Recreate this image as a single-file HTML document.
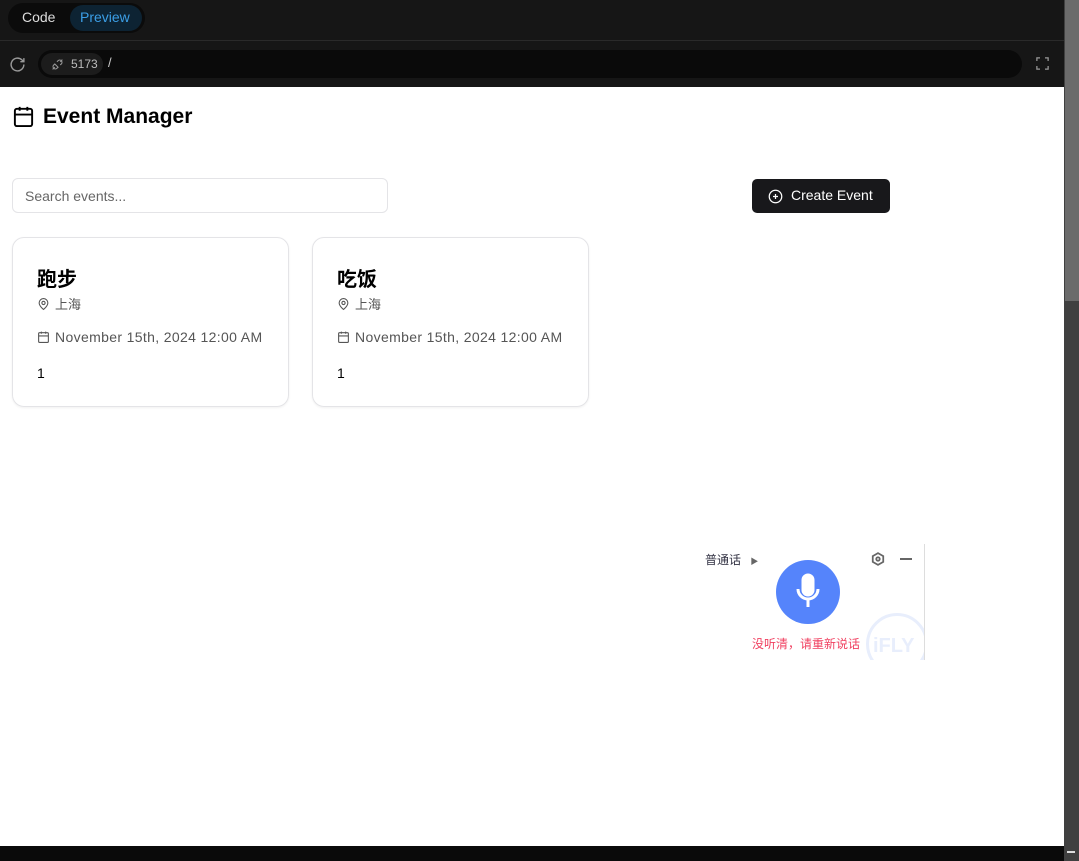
<!DOCTYPE html>
<html><head><meta charset="utf-8"><style>
*{box-sizing:border-box;margin:0;padding:0}
body{width:1079px;height:861px;overflow:hidden;background:#161616;font-family:"Liberation Sans","Noto Sans CJK SC",sans-serif;position:relative}
.top{position:absolute;left:0;top:0;width:1064px;height:41px;background:#161616;border-bottom:1px solid #2a2a2a}
.tabs{position:absolute;left:8px;top:3px;height:30px;width:137px;border-radius:15px;background:#0b0b0b}
.tabs span{position:absolute;top:6px;font-size:14px}
.bar{position:absolute;left:0;top:42px;width:1064px;height:45px;background:#161616}
.url{position:absolute;left:38px;top:8px;width:984px;height:28px;border-radius:14px;background:#0a0a0a}
.port{position:absolute;left:3px;top:3px;width:62px;height:22px;border-radius:11px;background:#1c1c1c;color:#bbb;font-size:12px;padding:4px 0 0 30px}
.main{position:absolute;left:0;top:87px;width:1064px;height:759px;background:#fff}
.sb{position:absolute;left:1064px;top:0;width:15px;height:861px;background:#404040}
.thumb{position:absolute;left:1065px;top:0;width:14px;height:301px;background:#6b6b6b}
.card{position:absolute;top:150px;width:277px;height:170px;border:1px solid #e4e4e7;border-radius:12px;box-shadow:0 1px 2px rgba(0,0,0,.06)}
.card h3{position:absolute;left:24px;top:25px;font-size:20px;font-weight:bold;color:#000}
.card .loc{position:absolute;left:24px;top:56px;font-size:13px;color:#555}
.card .dt{position:absolute;left:24px;top:91px;font-size:14px;color:#555;letter-spacing:0.35px}
.card .n{position:absolute;left:24px;top:127px;font-size:14px;color:#000}
</style></head><body>
<div class="top"><div class="tabs"><span style="left:14px;color:#ddd">Code</span><div style="position:absolute;left:62px;top:2px;width:72px;height:26px;border-radius:13px;background:#0d2333"></div><span style="left:72px;color:#3b9ee6">Preview</span></div></div>
<div class="bar">
<svg style="position:absolute;left:9px;top:14px" width="17" height="17" viewBox="0 0 24 24" fill="none" stroke="#999" stroke-width="2"><path d="M21 12a9 9 0 1 1-3-6.7L21 8M21 3v5h-5"/></svg>
<div class="url"><div class="port"><svg style="position:absolute;left:10px;top:5px" width="13" height="13" viewBox="0 0 24 24" fill="none" stroke="#999" stroke-width="2"><path d="M3 21l4-4M17 7l4-4M7 11l6 6-2 2a4 4 0 0 1-6-6zM11 7l2-2a4 4 0 0 1 6 6l-2 2"/></svg>5173</div><span style="position:absolute;left:70px;top:5px;color:#ccc;font-size:13px">/</span></div>
<svg style="position:absolute;left:1035px;top:14px" width="15" height="15" viewBox="0 0 24 24" fill="none" stroke="#999" stroke-width="2"><path d="M3 8V3h5M16 3h5v5M21 16v5h-5M8 21H3v-5"/></svg>
</div>
<div class="main">
<svg style="position:absolute;left:12px;top:18px" width="23" height="23" viewBox="0 0 24 24" fill="none" stroke="#000" stroke-width="2"><rect x="3" y="4" width="18" height="18" rx="2"/><path d="M16 2v4M8 2v4M3 10h18"/></svg>
<div style="position:absolute;left:43px;top:18px;font-size:21px;font-weight:bold;color:#000">Event Manager</div>
<div style="position:absolute;left:12px;top:91px;width:376px;height:35px;border:1px solid #e4e4e7;border-radius:6px;font-size:14px;color:#666;padding:9px 0 0 12px">Search events...</div>
<div style="position:absolute;left:752px;top:92px;width:138px;height:34px;background:#18181b;border-radius:5px;color:#fff;font-size:14px;padding:8px 0 0 39px">Create Event
<svg style="position:absolute;left:16px;top:10px" width="15" height="15" viewBox="0 0 24 24" fill="none" stroke="#fff" stroke-width="2"><circle cx="12" cy="12" r="10"/><path d="M12 8v8M8 12h8"/></svg></div>
<div class="card" style="left:12px"><h3>跑步</h3><div class="loc">
<svg style="vertical-align:-2px;margin-right:5px" width="13" height="14" viewBox="0 0 24 24" fill="none" stroke="#555" stroke-width="2"><path d="M20 10c0 6-8 12-8 12s-8-6-8-12a8 8 0 0 1 16 0z"/><circle cx="12" cy="10" r="3"/></svg>上海</div>
<div class="dt"><svg style="vertical-align:-2px;margin-right:5px" width="13" height="14" viewBox="0 0 24 24" fill="none" stroke="#555" stroke-width="2"><rect x="3" y="4" width="18" height="18" rx="2"/><path d="M16 2v4M8 2v4M3 10h18M8 14h.01M12 14h.01M16 14h.01M8 18h.01M12 18h.01M16 18h.01"/></svg>November 15th, 2024 12:00 AM</div><div class="n">1</div></div>
<div class="card" style="left:312px"><h3>吃饭</h3><div class="loc">
<svg style="vertical-align:-2px;margin-right:5px" width="13" height="14" viewBox="0 0 24 24" fill="none" stroke="#555" stroke-width="2"><path d="M20 10c0 6-8 12-8 12s-8-6-8-12a8 8 0 0 1 16 0z"/><circle cx="12" cy="10" r="3"/></svg>上海</div>
<div class="dt"><svg style="vertical-align:-2px;margin-right:5px" width="13" height="14" viewBox="0 0 24 24" fill="none" stroke="#555" stroke-width="2"><rect x="3" y="4" width="18" height="18" rx="2"/><path d="M16 2v4M8 2v4M3 10h18M8 14h.01M12 14h.01M16 14h.01M8 18h.01M12 18h.01M16 18h.01"/></svg>November 15th, 2024 12:00 AM</div><div class="n">1</div></div>
<div style="position:absolute;left:690px;top:457px;width:234px;height:116px;overflow:hidden">
<div style="position:absolute;left:176px;top:69px;width:62px;height:62px;border-radius:50%;border:3px solid #e8eefc"></div>
<div style="position:absolute;left:183px;top:91px;font-size:20px;font-weight:bold;color:#e8eefc">iFLY</div>
</div>
<div style="position:absolute;left:924px;top:457px;width:1px;height:116px;background:#ddd"></div>
<div style="position:absolute;left:705px;top:464px;font-size:12px;color:#334">普通话 <span style="font-size:8px;color:#666;margin-left:6px">▶</span></div>
<svg style="position:absolute;left:871px;top:465px" width="14" height="14" viewBox="0 0 24 24" fill="none" stroke="#666" stroke-width="3"><polygon points="12,2 21,7 21,17 12,22 3,17 3,7"/><circle cx="12" cy="12" r="3"/></svg>
<div style="position:absolute;left:900px;top:471px;width:12px;height:1.5px;background:#666"></div>
<div style="position:absolute;left:776px;top:473px;width:64px;height:64px;border-radius:50%;background:#5584fb"></div>
<svg style="position:absolute;left:792px;top:486px" width="32" height="38" viewBox="0 0 32 38" fill="none" stroke="#fff" stroke-width="3"><rect x="11" y="2" width="10" height="20" rx="5" fill="#fff"/><path d="M6 16a10 10 0 0 0 20 0M16 26v8"/></svg>
<div style="position:absolute;left:752px;top:548px;font-size:12px;color:#f04060">没听清，请重新说话</div>
</div>
<div style="position:absolute;left:0;top:846px;width:1064px;height:15px;background:#0a0a0a"></div>
<div class="sb"></div><div class="thumb"></div>
<div style="position:absolute;left:1067px;top:851px;width:8px;height:2px;background:#ddd"></div>
</body></html>
